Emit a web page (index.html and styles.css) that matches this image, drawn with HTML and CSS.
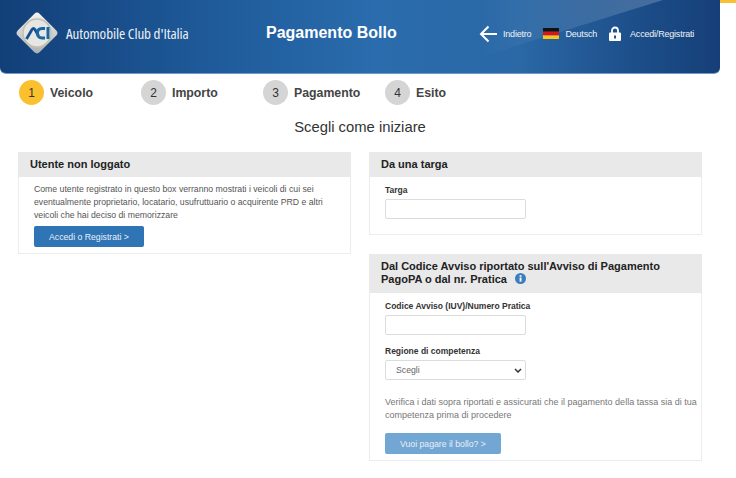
FILE: index.html
```html
<!DOCTYPE html>
<html lang="it">
<head>
<meta charset="utf-8">
<title>Pagamento Bollo</title>
<link rel="stylesheet" href="styles.css">
</head>
<body>
<div class="accent"></div>
<div class="page">
  <header class="topbar">
    <div class="brand">
      <svg class="logo" width="46" height="46" viewBox="0 0 46 46">
        <defs><linearGradient id="dia" x1="0" y1="0" x2="1" y2="1"><stop offset="0" stop-color="#f6f6f4"/><stop offset="1" stop-color="#a9adb0"/></linearGradient></defs>
        <rect x="7.500" y="7.500" width="31" height="31" rx="4" transform="rotate(45 23 23)" fill="url(#dia)"/>
        <circle cx="23" cy="23" r="14" fill="#e6e7e3" stroke="#c4c0b0" stroke-width="1.500"/>
        <path d="M12.500 29 L18 19.500 Q19.500 17.500 21 19.500 L24.500 26" fill="none" stroke="#15528f" stroke-width="2.800"/>
        <path d="M31 18.500 H28 Q23.500 18.500 23.500 23.300 Q23.500 28 28 28 H31" fill="none" stroke="#1a66a5" stroke-width="2.800"/>
        <path d="M34 17 V29" stroke="#1a66a5" stroke-width="3"/>
      </svg>
      <span class="brand-name">Automobile Club d'Italia</span>
    </div>
    <div class="app-title">Pagamento Bollo</div>
    <nav class="actions">
      <a class="action">
        <svg width="18" height="18" viewBox="0 0 18 18"><path d="M18 9H2M9.500 1.500 2 9l7.500 7.500" fill="none" stroke="#fff" stroke-width="2"/></svg>
        <span>Indietro</span>
      </a>
      <a class="action lang">
        <svg width="16" height="11" viewBox="0 0 16 11"><rect width="16" height="3.700" fill="#111"/><rect y="3.700" width="16" height="3.700" fill="#d8141c"/><rect y="7.400" width="16" height="3.600" fill="#f7c51e"/></svg>
        <span>Deutsch</span>
      </a>
      <a class="action login">
        <svg width="12" height="15" viewBox="0 0 12 15"><path d="M3 7V4.500a3 3 0 0 1 6 0V7" fill="none" stroke="#fff" stroke-width="1.800"/><path fill-rule="evenodd" d="M1 6.500h10a1 1 0 0 1 1 1V14a1 1 0 0 1-1 1H1a1 1 0 0 1-1-1V7.500a1 1 0 0 1 1-1zM5 9.500v3h2v-3z" fill="#fff"/></svg>
        <span>Accedi/Registrati</span>
      </a>
    </nav>
  </header>

  <ol class="steps">
    <li class="step step-one current"><span class="num">1</span>Veicolo</li>
    <li class="step step-two"><span class="num">2</span>Importo</li>
    <li class="step step-three"><span class="num">3</span>Pagamento</li>
    <li class="step"><span class="num">4</span>Esito</li>
  </ol>

  <h1 class="lead">Scegli come iniziare</h1>

  <main class="columns">
    <section class="panel">
      <h2 class="panel-head">Utente non loggato</h2>
      <div class="panel-body user-body">
        <p class="note">Come utente registrato in questo box verranno mostrati i veicoli di cui sei eventualmente proprietario, locatario, usufruttuario o acquirente PRD e altri veicoli che hai deciso di memorizzare</p>
        <button class="btn" type="button">Accedi o Registrati &gt;</button>
      </div>
    </section>
    <div class="stack">
      <section class="panel">
        <h2 class="panel-head">Da una targa</h2>
        <div class="panel-body form-body plate-body">
          <label class="label" for="targa">Targa</label>
          <input class="field" id="targa" type="text">
        </div>
      </section>
      <section class="panel">
        <h2 class="panel-head tall-head">Dal Codice Avviso riportato sull'Avviso di Pagamento PagoPA o dal nr. Pratica
          <svg class="info" width="11" height="11" viewBox="0 0 11 11"><circle cx="5.500" cy="5.500" r="5.500" fill="#3b7dbd"/><rect x="4.600" y="4.600" width="1.900" height="4" fill="#fff"/><rect x="4.600" y="2.200" width="1.900" height="1.600" fill="#fff"/></svg>
        </h2>
        <div class="panel-body form-body">
          <label class="label" for="iuv">Codice Avviso (IUV)/Numero Pratica</label>
          <input class="field" id="iuv" type="text">
          <label class="label region-label" for="reg">Regione di competenza</label>
          <select class="field select" id="reg"><option>Scegli</option></select>
          <p class="hint">Verifica i dati sopra riportati e assicurati che il pagamento della tassa sia di tua competenza prima di procedere</p>
          <button class="btn btn-muted" type="button">Vuoi pagare il bollo? &gt;</button>
        </div>
      </section>
    </div>
  </main>
</div>
</body>
</html>
```
FILE: styles.css
```css
* { box-sizing: border-box; }
html, body { margin: 0; padding: 0; }
body {
  background: #fff;
  color: #333;
  font-family: "Liberation Sans", Arial, sans-serif;
  height: 478px;
  overflow: hidden;
  position: relative;
}
.accent {
  position: absolute;
  top: 0;
  left: 720px;
  width: 16px;
  height: 3px;
  background: #f7c136;
}
.page { width: 720px; }
.topbar {
  height: 74px;
  display: flex;
  align-items: center;
  color: #fff;
  border-radius: 0 0 6px 6px;
  border-bottom: 1px solid #6f9cc6;
  background: linear-gradient(90deg, #123f78 0%, #1f5b9b 30%, #2a6cad 52%, #2a68a6 72%, #1b4c87 90%, #163f78 100%);
  position: relative;
}
.topbar::before {
  content: "";
  position: absolute;
  top: 0;
  left: 480px;
  width: 183px;
  height: 57px;
  background: linear-gradient(90deg, rgba(255,255,255,0), rgba(255,255,255,.2));
  clip-path: polygon(100% 0, 0 100%, 0 0);
}
.topbar > * { position: relative; }
.brand {
  width: 266px;
  display: flex;
  align-items: center;
  padding-left: 14px;
  flex: none;
  margin-top: -7px;
}
.brand-name {
  font-family: "Open Sans", sans-serif;
  font-stretch: condensed;
  font-size: 15.100px;
  letter-spacing: -.1px;
  margin-left: 6px;
  white-space: nowrap;
  color: #e9eff6;
}
.app-title {
  width: 213px;
  flex: none;
  font-size: 16px;
  font-weight: 700;
  margin-top: -7px;
}
.actions {
  display: flex;
  align-items: center;
  margin-top: -6px;
  font-size: 9px;
  letter-spacing: -.2px;
}
.action { display: flex; align-items: center; gap: 6px; white-space: nowrap; color: #eef3f8; }
.lang { margin-left: 12px; }
.login { margin-left: 12px; gap: 9px; }
.steps {
  list-style: none;
  display: flex;
  margin: 6px 0 0;
  padding: 0 0 0 19px;
  height: 25px;
  font-size: 12.300px;
  font-weight: 700;
  color: #444;
}
.step { display: flex; align-items: center; gap: 6px; }
.step-one { width: 122px; }
.step-two { width: 122px; }
.step-three { width: 122px; }
.num {
  width: 25px;
  height: 25px;
  border-radius: 50%;
  background: #d5d5d5;
  display: flex;
  align-items: center;
  justify-content: center;
  font-size: 12px;
  font-weight: 400;
  color: #333;
}
.current .num { background: #fbc02d; }
.lead {
  margin: 12px 0 0;
  font-size: 14.800px;
  line-height: 20px;
  font-weight: 400;
  text-align: center;
  color: #333;
}
.columns {
  display: grid;
  grid-template-columns: 333px 333px;
  column-gap: 18px;
  align-items: start;
  padding: 0 18px;
  margin-top: 15px;
}
.stack { display: flex; flex-direction: column; gap: 19px; }
.panel { border: 1px solid #ececec; border-top: 0; }
.panel-head {
  margin: 0 -1px;
  background: #e9e9e9;
  color: #222;
  font-size: 11px;
  line-height: 13px;
  font-weight: 700;
  padding: 6px 12px;
}
.tall-head { padding-bottom: 7px; }
.info { margin-left: 5px; vertical-align: -1px; }
.panel-body { padding: 6px 15px; }
.note {
  margin: 0 0 4px;
  font-size: 8.700px;
  line-height: 13px;
  color: #555;
}
.btn {
  display: block;
  height: 21px;
  width: 110px;
  border: 0;
  border-radius: 2px;
  background: #2f74b5;
  color: #e8f0f8;
  font-family: "Liberation Sans", Arial, sans-serif;
  font-size: 8.700px;
  padding: 0 15px;
  text-align: left;
  white-space: nowrap;
}
.btn-muted { width: 116px; background: #72a6d3; margin-top: 11px; }
.form-body { padding: 7px 15px 6px; }
.plate-body { padding-bottom: 15px; }
.label {
  display: block;
  font-size: 8.500px;
  font-weight: 700;
  line-height: 12px;
  color: #333;
  margin-bottom: 3px;
}
.field {
  display: block;
  width: 141px;
  height: 20px;
  border: 1px solid #dcdcdc;
  border-radius: 2px;
  background: #fff;
  color: #666;
  font-family: "Liberation Sans", Arial, sans-serif;
  font-size: 8.700px;
}
.select {
  padding: 0 10px;
  appearance: none;
  background: #fff url("data:image/svg+xml,%3Csvg xmlns='http://www.w3.org/2000/svg' width='8' height='5'%3E%3Cpath d='M1 1l3 3 3-3' fill='none' stroke='%23333' stroke-width='1.500'/%3E%3C/svg%3E") no-repeat right 3px center;
}
.region-label { margin-top: 10px; }
.hint {
  margin: 16px -14px 0 0;
  font-size: 9px;
  line-height: 13px;
  color: #777;
}
```
